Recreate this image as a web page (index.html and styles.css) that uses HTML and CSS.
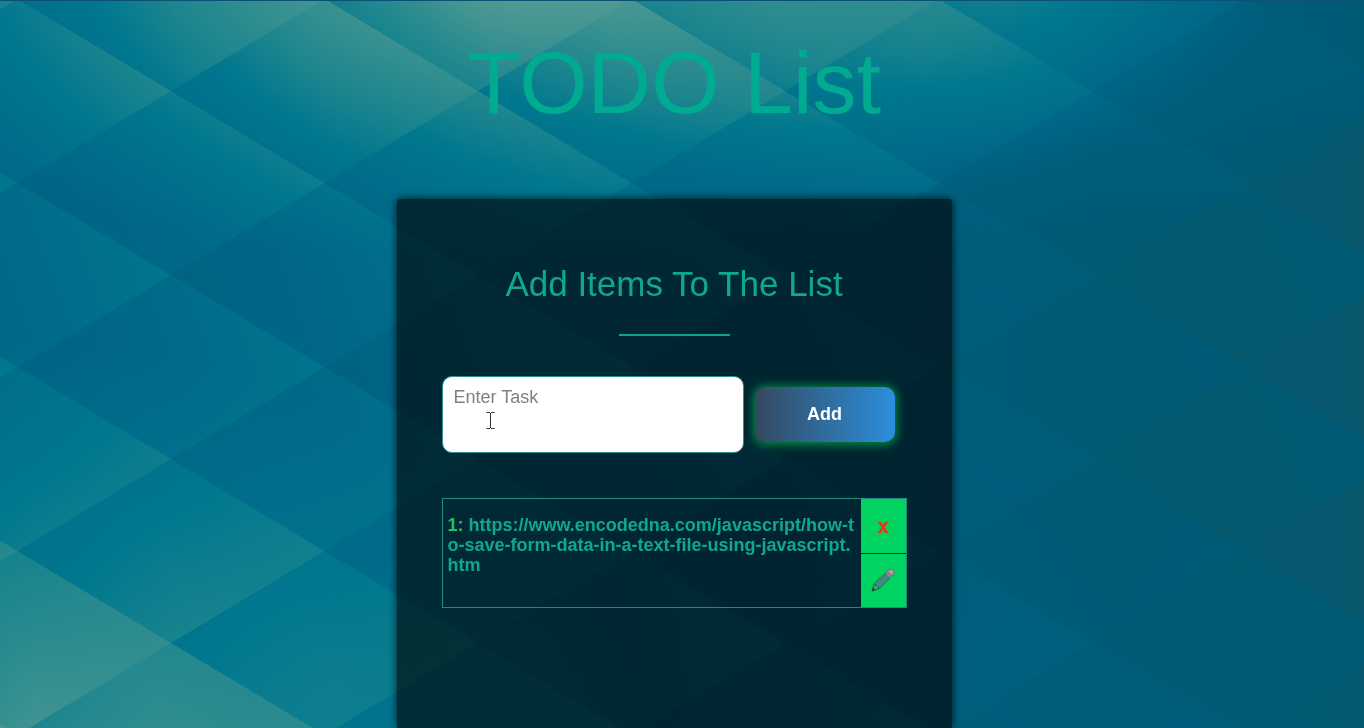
FILE: index.html
```html
<!DOCTYPE html>
<html lang="en">
<head>
<meta charset="utf-8">
<title>TODO List</title>
<link rel="stylesheet" href="styles.css">
</head>
<body>
<svg class="backdrop" viewBox="0 0 1364 728" preserveAspectRatio="xMidYMid slice" aria-hidden="true">
  <defs>
    <linearGradient id="base" gradientUnits="userSpaceOnUse" x1="0" y1="0" x2="1364" y2="0">
      <stop offset="0" stop-color="#727272"/>
      <stop offset=".4" stop-color="#6a6a6a"/>
      <stop offset=".65" stop-color="#424242"/>
      <stop offset=".82" stop-color="#1a1a1a"/>
      <stop offset="1" stop-color="#0c0c0c"/>
    </linearGradient>
    <radialGradient id="glow">
      <stop offset="0" stop-color="#fff" stop-opacity=".96"/>
      <stop offset=".45" stop-color="#fff" stop-opacity=".52"/>
      <stop offset="1" stop-color="#fff" stop-opacity="0"/>
    </radialGradient>
    <radialGradient id="soft">
      <stop offset="0" stop-color="#fff" stop-opacity=".5"/>
      <stop offset="1" stop-color="#fff" stop-opacity="0"/>
    </radialGradient>
    <radialGradient id="faint">
      <stop offset="0" stop-color="#fff" stop-opacity=".16"/>
      <stop offset="1" stop-color="#fff" stop-opacity="0"/>
    </radialGradient>
    <linearGradient id="facet" x1="0" y1=".6" x2="1" y2=".4">
      <stop offset="0" stop-color="#000" stop-opacity=".2"/>
      <stop offset=".5" stop-color="#000" stop-opacity="0"/>
      <stop offset=".5" stop-color="#fff" stop-opacity="0"/>
      <stop offset="1" stop-color="#fff" stop-opacity=".26"/>
    </linearGradient>
    <pattern id="lattice" patternUnits="userSpaceOnUse" x="171" y="-1" width="307" height="184">
      <path fill="url(#facet)" d="M0 92 153.500 0 307 92 153.500 184z"/>
      <path fill="url(#facet)" d="M-153.500 0 0-92 153.500 0 0 92z"/>
      <path fill="url(#facet)" d="M153.500 0 307-92 460.500 0 307 92z"/>
      <path fill="url(#facet)" d="M-153.500 184 0 92 153.500 184 0 276z"/>
      <path fill="url(#facet)" d="M153.500 184 307 92 460.500 184 307 276z"/>
    </pattern>
    <linearGradient id="fade" gradientUnits="userSpaceOnUse" x1="0" y1="0" x2="1364" y2="0">
      <stop offset=".5" stop-color="#fff"/>
      <stop offset=".85" stop-color="#777"/>
    </linearGradient>
    <mask id="fademask"><rect width="1364" height="728" fill="url(#fade)"/></mask>
    <filter id="palette" x="0" y="0" width="1" height="1" color-interpolation-filters="sRGB">
      <feComponentTransfer>
        <feFuncR type="table" tableValues=".06 .01 0 0 0 0 0 .1 .2 .31 .48"/>
        <feFuncG type="table" tableValues=".34 .36 .36 .375 .4 .435 .47 .52 .56 .605 .66"/>
        <feFuncB type="table" tableValues=".42 .45 .475 .49 .53 .545 .56 .56 .565 .575 .59"/>
      </feComponentTransfer>
    </filter>
  </defs>
  <g filter="url(#palette)">
    <rect width="1364" height="728" fill="url(#base)"/>
    <ellipse cx="520" cy="-40" rx="760" ry="300" fill="url(#glow)"/>
    <ellipse cx="1000" cy="-20" rx="460" ry="270" fill="url(#soft)"/>
    <ellipse cx="-20" cy="830" rx="700" ry="490" fill="url(#glow)"/>
    <ellipse cx="1000" cy="800" rx="480" ry="300" fill="url(#faint)"/>
    <rect width="1364" height="728" fill="url(#lattice)" mask="url(#fademask)"/>
  </g>
</svg>

<main class="page">
  <h1 class="title">TODO List</h1>
  <section class="card">
    <h2 class="card-title">Add Items To The List</h2>
    <hr class="rule">
    <form class="entry">
      <div class="field">
        <textarea class="task" placeholder="Enter Task" aria-label="Enter Task"></textarea>
        <svg class="caret" width="9" height="19" viewBox="0 0 9 19" aria-hidden="true"><path d="M.5 1.500H4M5 1.500h3.500M4.500 2v15M.5 17.500H4M5 17.500h3.500" fill="none" stroke="#333" stroke-width="1"/></svg>
      </div>
      <button class="add" type="button">Add</button>
    </form>
    <ul class="items">
      <li class="item">
        <p class="item-text"><span class="num">1:</span> https://www.encodedna.com/javascript/how-to-save-form-data-in-a-text-file-using-javascript.htm</p>
        <div class="actions">
          <button class="action remove" type="button" aria-label="Delete">x</button>
          <button class="action" type="button" aria-label="Edit">
            <svg width="24" height="24" viewBox="0 0 24 24" aria-hidden="true">
              <path d="M1 23 3.500 15.500 16.500 3.500 21 8 8.500 20.500z" fill="#4b8f88" stroke="#2c6058" stroke-width="1" stroke-linejoin="round"/>
              <path d="M5.500 17 17.500 5.500M7 19 19.500 7" stroke="#3a7472" stroke-width="1"/>
              <path d="M3.500 15.500 8.500 20.500 1 23z" fill="#2fa868" stroke="#24694b"/>
              <path d="M1 23 2 19.800 4.200 22z" fill="#163a35"/>
              <path d="M16.500 3.500 18.500 1.800Q20.500.5 22.200 2.200T22.500 6L21 8z" fill="#cf939f" stroke="#7a6a6c"/>
              <path d="M15.500 4.500 20 9" stroke="#8a9ca2" stroke-width="1.500"/>
            </svg>
          </button>
        </div>
      </li>
    </ul>
  </section>
</main>
</body>
</html>
```
FILE: styles.css
```css
* { box-sizing: border-box; }

body {
  margin: 0;
  min-height: 100vh;
  overflow: hidden;
  background: #00607c;
  color: #10a88c;
  font-family: "Liberation Sans", Arial, sans-serif;
}

.backdrop {
  position: fixed;
  inset: 0;
  z-index: -1;
  width: 100%;
  height: 100%;
}

.page {
  display: flex;
  flex-direction: column;
  align-items: center;
  min-height: 100vh;
  padding: 32px 16px 0 0;
  border-top: 1px solid #0b5075;
}

.title {
  margin: 0 0 66px;
  color: #00ab91;
  font-size: 88px;
  font-weight: 400;
  line-height: 100px;
}

.card {
  flex: 1;
  width: 100%;
  max-width: 555px;
  padding: 65px 45px 100px;
  border-radius: 3px 3px 0 0;
  background: rgba(0, 0, 0, .61);
  box-shadow: 0 0 8px rgba(0, 0, 0, .8);
}

.card-title {
  margin: 0;
  font-size: 35px;
  font-weight: 400;
  line-height: 40px;
  text-align: center;
}

.rule {
  width: 111px;
  height: 2px;
  margin: 30px auto 40px;
  border: 0;
  background: #10a090;
}

.entry {
  display: flex;
  align-items: center;
  gap: 11px;
}

.field {
  position: relative;
  flex: 0 1 302px;
}

.task {
  display: block;
  width: 100%;
  height: 77px;
  padding: 10px 11px;
  border: 1px solid #2f8f98;
  border-radius: 10px;
  background: #fff;
  font: 18px/20px "Liberation Sans", Arial, sans-serif;
  resize: none;
}

.task::placeholder { color: #808080; }

.caret {
  position: absolute;
  top: 35px;
  left: 44px;
}

.add {
  flex: 0 1 140px;
  height: 55px;
  padding: 0 0 2px;
  border: 0;
  border-radius: 10px;
  background: linear-gradient(90deg, #34495e, #2b8fdc);
  box-shadow: 0 1px 8px 2px #008a45;
  color: #fff;
  font: bold 18px/20px "Liberation Sans", Arial, sans-serif;
}

.items {
  margin: 45px 0 0;
  padding: 0;
  list-style: none;
}

.item {
  display: flex;
  min-height: 110px;
  border: 1px solid #1f8c80;
}

.item-text {
  flex: 1;
  margin: 0;
  padding: 16px 6px 16px 5px;
  font-size: 18px;
  font-weight: 700;
  line-height: 20px;
  word-break: break-all;
}

.num { color: #1fc45c; }

.actions {
  display: flex;
  flex-direction: column;
  flex: 0 0 45px;
}

.action {
  display: flex;
  flex: 1;
  align-items: center;
  justify-content: center;
  padding: 0;
  border: 0;
  background: #00d360;
}

.remove {
  border-bottom: 1px solid #123c10;
  color: #f03010;
  font: bold 20px/20px "DejaVu Sans Mono", monospace;
}
```
